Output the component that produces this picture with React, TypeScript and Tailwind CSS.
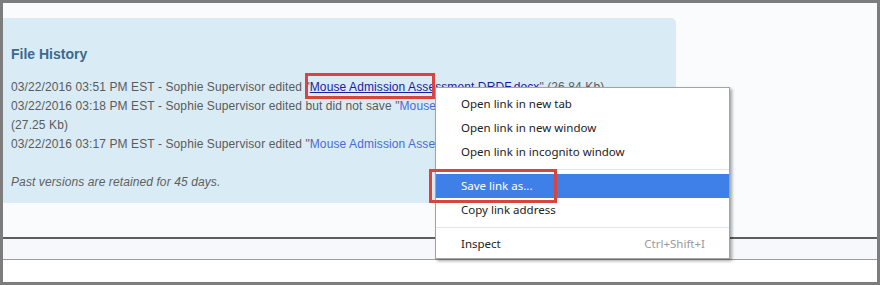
import React from "react";

const bodyFont = "font-['Liberation_Sans',Arial,sans-serif]";
const menuFont = "font-['Noto_Sans','Open_Sans',sans-serif]";

function HistoryLine({ children }: { children: React.ReactNode }) {
  return <div className="h-[19px] leading-[19px] whitespace-nowrap">{children}</div>;
}

function MenuItem({
  label,
  shortcut,
  active,
}: {
  label: string;
  shortcut?: string;
  active?: boolean;
}) {
  return (
    <div
      className={`flex h-6 items-center pl-[25px] pr-[24px] ${
        active ? "bg-[#3f7fe8] text-white" : "text-[#222]"
      }`}
    >
      <span className="mr-auto">{label}</span>
      {shortcut && <span className="text-[#9a9a9a]">{shortcut}</span>}
    </div>
  );
}

function Separator() {
  return (
    <div className="flex h-[10px] items-center">
      <div className="h-px w-full bg-[#e6e6e6]" />
    </div>
  );
}

export default function App() {
  return (
    <div
      className={`relative h-[285px] w-[880px] overflow-hidden border-[3px] border-[#7d7d7d] bg-[#fafbfd] ${bodyFont}`}
    >
      <div className="h-[15px]" />

      {/* file history panel */}
      <div className="h-[185px] w-[673px] rounded-tr-[5px] bg-[#d9ecf6] pl-2 pt-[27px] text-[12px] tracking-[0.1px] text-[#5b5b5b]">
        <h3 className="mb-[15px] h-[18px] text-[14px] font-bold leading-[18px] tracking-normal text-[#3b6a8d]">
          File History
        </h3>
        <HistoryLine>
          03/22/2016 03:51 PM EST - Sophie Supervisor edited "
          <span className="text-[#1c1aa0] underline">Mouse Admission Assessment DRDF.docx</span>" (26.84 Kb)
        </HistoryLine>
        <HistoryLine>
          03/22/2016 03:18 PM EST - Sophie Supervisor edited but did not save "
          <span className="text-[#4a6bd6]">Mouse Admission Assessment DRDF.docx</span>"
        </HistoryLine>
        <HistoryLine>(27.25 Kb)</HistoryLine>
        <HistoryLine>
          03/22/2016 03:17 PM EST - Sophie Supervisor edited "
          <span className="text-[#4a6bd6]">Mouse Admission Assessment DRDF.docx</span>" (27.25 Kb)
        </HistoryLine>
        <div className="mt-[19px] h-[19px] leading-[19px] italic text-[#606060]">
          Past versions are retained for 45 days.
        </div>
      </div>

      <div className="h-[34px]" />
      <div className="h-[23px] border-t-2 border-b border-t-[#5e5e5e] border-b-[#9c9c9c] bg-[#f7f8fb]" />
      <div className="h-[21px] bg-white" />

      {/* context menu */}
      <div
        className={`absolute left-[432px] top-[84px] h-[172px] w-[295px] border border-[#a3a3a3] bg-white pt-[4px] text-[11.5px] shadow-[2px_2px_3px_rgba(0,0,0,0.35)] ${menuFont}`}
      >
        <MenuItem label="Open link in new tab" />
        <MenuItem label="Open link in new window" />
        <MenuItem label="Open link in incognito window" />
        <Separator />
        <MenuItem label="Save link as..." active />
        <MenuItem label="Copy link address" />
        <Separator />
        <MenuItem label="Inspect" shortcut="Ctrl+Shift+I" />
      </div>

      {/* highlight boxes */}
      <div className="absolute left-[302px] top-[70px] h-[26px] w-[130px] border-[3px] border-[#d9443f]" />
      <div className="absolute left-[426px] top-[166px] h-[34px] w-[128px] border-[3px] border-[#d9443f]" />
    </div>
  );
}
